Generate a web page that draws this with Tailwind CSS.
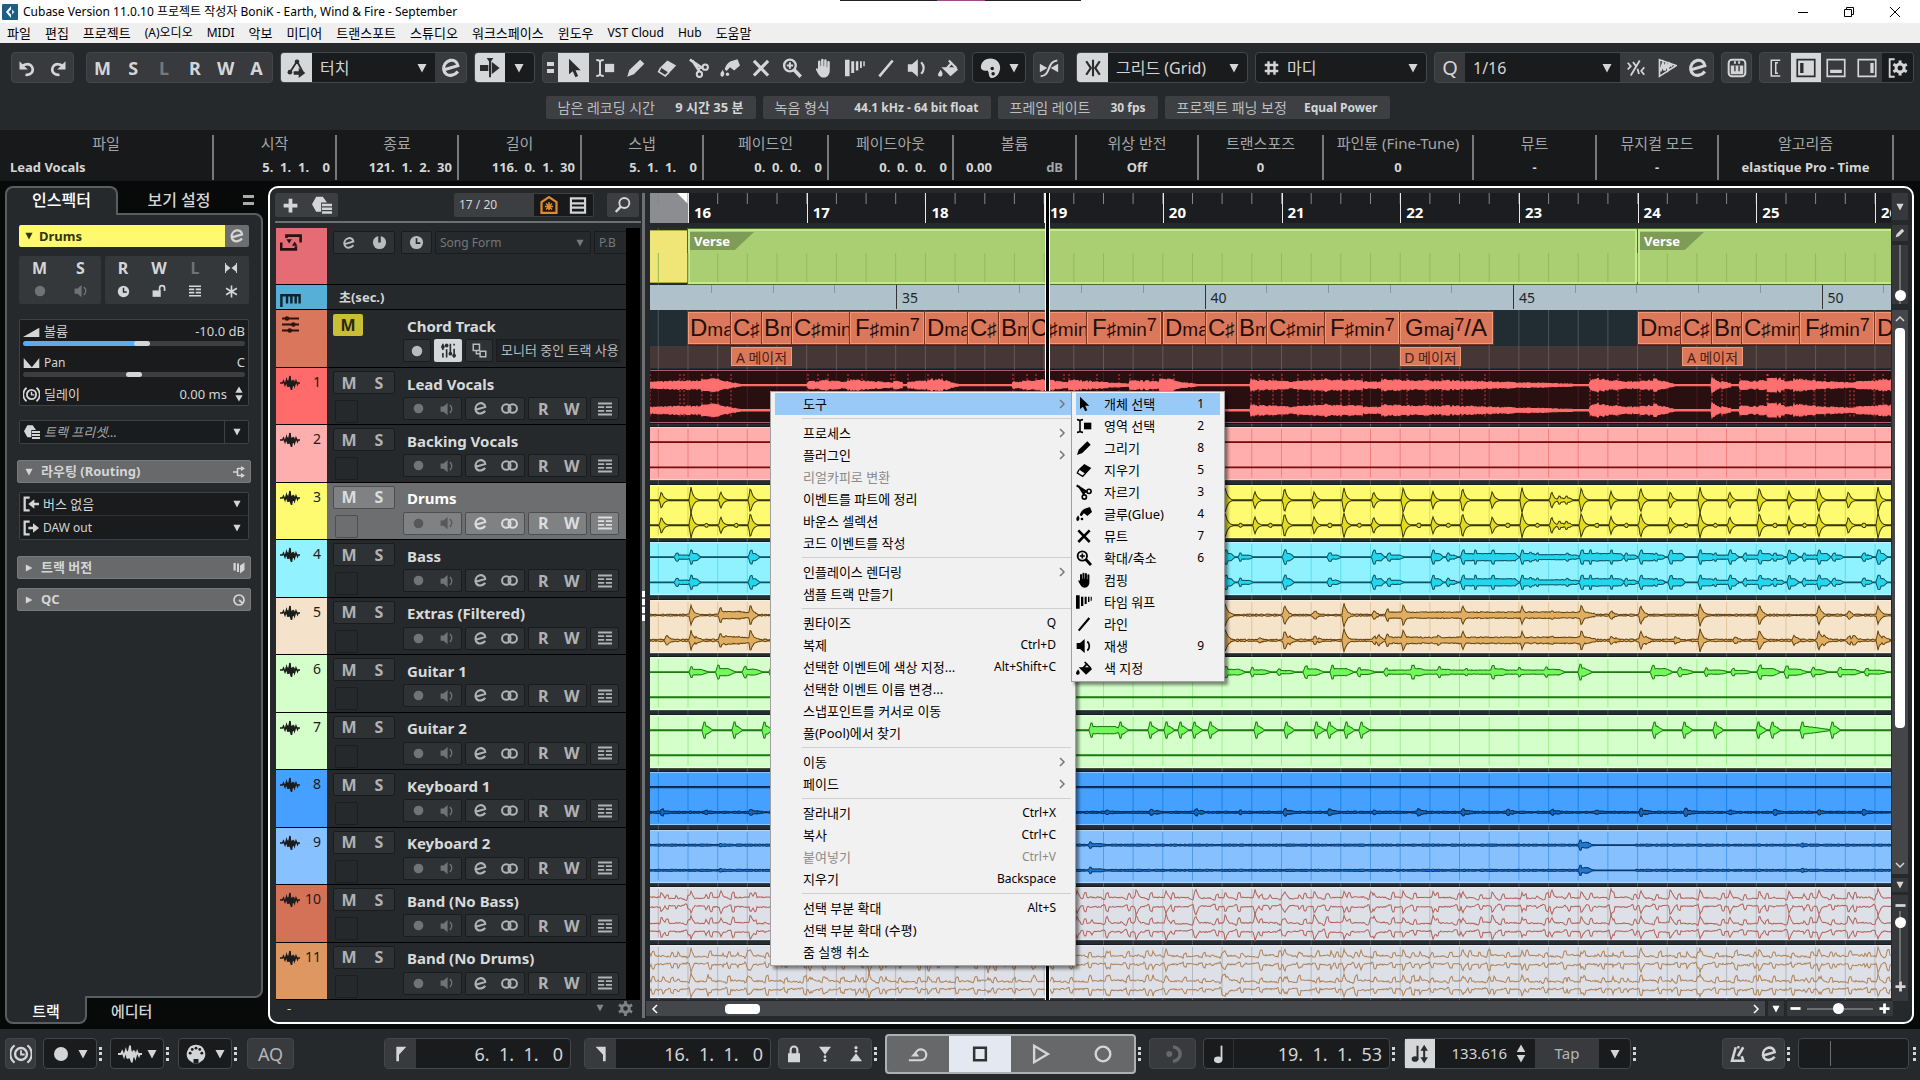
<!DOCTYPE html>
<html lang="ko">
<head>
  <meta charset="UTF-8">
  <meta name="viewport" content="width=device-width, initial-scale=1.0">
  <title>Cubase - September</title>
  <script src="https://cdn.jsdelivr.net/npm/@tailwindcss/browser@4"></script>
</head>
<body class="h-screen flex flex-col overflow-hidden bg-[#080909] text-[#d4d5d6] text-[13px] leading-none font-['Noto_Sans','Noto_Sans_CJK_KR',sans-serif]">

  <!-- icon sprite -->
  <svg class="hidden" aria-hidden="true">
    <symbol id="i-down" viewBox="0 0 10 10"><path d="M.5 1h9L5 9.500z" fill="currentColor"/></symbol>
    <symbol id="i-right" viewBox="0 0 10 10"><path d="M1 .5v9L9.500 5z" fill="currentColor"/></symbol>
    <symbol id="i-undo" viewBox="0 0 24 24"><path d="M4 11c4-5 12-6 15 0 2.500 6-2 11-9 10" fill="none" stroke="currentColor" stroke-width="3.400"/><path d="M2 3v11h11z" fill="currentColor"/></symbol>
    <symbol id="i-redo" viewBox="0 0 24 24"><path d="M20 11C16 6 8 5 5 11c-2.500 6 2 11 9 10" fill="none" stroke="currentColor" stroke-width="3.400"/><path d="M22 3v11H11z" fill="currentColor"/></symbol>
    <symbol id="i-e" viewBox="0 0 24 24"><path d="M4.500 14L19.500 9.500C19 5 15 2.800 11 3.700 6.500 4.700 3.600 9 4 13.500c.5 4.800 4.500 7.200 9 6.300 2.600-.5 5-2 6.500-4" fill="none" stroke="currentColor" stroke-width="3.400"/></symbol>
    <symbol id="i-auto" viewBox="0 0 24 24"><path d="M3 18L12 4l7 13" fill="none" stroke="currentColor" stroke-width="2.200"/><circle cx="3.500" cy="17" r="2.800" fill="currentColor"/><circle cx="12" cy="4.500" r="2.800" fill="currentColor"/><path d="M8 16h6v-4l8 6-8 6v-4H8z" fill="currentColor"/></symbol>
    <symbol id="i-scroll" viewBox="0 0 24 24"><path d="M0 8.500h10v7H0zM14 4.500l9.500 7.500-9.500 7.500z" fill="currentColor"/><path d="M12 3v20" stroke="currentColor" stroke-width="2.400"/><path d="M8 0h8l-4 6z" fill="currentColor"/></symbol>
    <symbol id="i-cursor" viewBox="0 0 24 24"><path d="M6 1v18.500l4.500-3.500 3.200 7 3.300-1.500-3.200-6.700H20z" fill="currentColor"/></symbol>
    <symbol id="i-range" viewBox="0 0 24 24"><path d="M1.500 2.500c2.500 0 4 .5 4.500 2 .5-1.500 2-2 4.500-2M6 4v16M1.500 21.500c2.500 0 4-.5 4.500-2 .5 1.500 2 2 4.500 2" fill="none" stroke="currentColor" stroke-width="2.400"/><path d="M12 7h11v10H12z" fill="currentColor"/></symbol>
    <symbol id="i-pencil" viewBox="0 0 24 24"><path d="M1.500 22.500L4 14.500 17 2l5 5L9.500 19.500z" fill="currentColor"/></symbol>
    <symbol id="i-eraser" viewBox="0 0 24 24"><path d="M12.500 3L23 9l-8.500 9L4 11z" fill="currentColor"/><path d="M4.500 11.500L2 16.500l8 5 4.500-4.500" fill="none" stroke="currentColor" stroke-width="2"/></symbol>
    <symbol id="i-scissors" viewBox="0 0 24 24"><path d="M1 2l15 10M4 3l8.500 13" stroke="currentColor" stroke-width="3.200"/><path d="M11 13l6-2" stroke="currentColor" stroke-width="2.200"/><circle cx="19.500" cy="11" r="3.200" fill="none" stroke="currentColor" stroke-width="2.400"/><circle cx="12.500" cy="19.500" r="3.200" fill="none" stroke="currentColor" stroke-width="2.400"/></symbol>
    <symbol id="i-glue" viewBox="0 0 24 24"><path d="M13 4l8-2.500L24 9l-7 6-5-4-4 4.500-2.500-2C7 9 9.500 5.800 13 4z" fill="currentColor"/><path d="M3 14c2 3 3 4.500 1.500 7S.5 22.500.5 19.500 2.500 16.500 3 14z" fill="currentColor"/><circle cx="9" cy="19.500" r="2" fill="currentColor"/></symbol>
    <symbol id="i-x" viewBox="0 0 24 24"><path d="M3.500 3.500l17 17.500M20.500 3.500L3.500 21" stroke="currentColor" stroke-width="3.800"/></symbol>
    <symbol id="i-zoom" viewBox="0 0 24 24"><circle cx="9.500" cy="9" r="7" fill="none" stroke="currentColor" stroke-width="2.800"/><path d="M9.500 5.200v7.600M5.700 9h7.600" stroke="currentColor" stroke-width="2.400"/><path d="M14.500 14l8 8.500" stroke="currentColor" stroke-width="4.400"/></symbol>
    <symbol id="i-hand" viewBox="0 0 24 24"><path d="M6 11V4.500a1.500 1.500 0 0 1 3 0V10h.7V2.500a1.500 1.500 0 0 1 3 0V10h.7V3a1.500 1.500 0 0 1 3 0v8h.7V5a1.500 1.500 0 0 1 3 0v10c0 5-3 8.500-7 8.500-4.500 0-6.500-3.500-9.500-9.500-.5-1.500 1-2.300 2-1.200L6 14.500z" fill="currentColor"/></symbol>
    <symbol id="i-warp" viewBox="0 0 24 24"><path d="M0 2h5.500v20H0zM7.500 4h3.500v14H7.500zM13 4h3v11h-3zM18 4h2.200v8H18zM22 4h1.700v6H22z" fill="currentColor"/></symbol>
    <symbol id="i-line" viewBox="0 0 24 24"><path d="M4 22L20 3" stroke="currentColor" stroke-width="3.200"/></symbol>
    <symbol id="i-speaker" viewBox="0 0 24 24"><path d="M1 7.500h5l7-6v21l-7-6H1z" fill="currentColor"/><path d="M17 5c4 4 4 10 0 14" fill="none" stroke="currentColor" stroke-width="2.600"/></symbol>
    <symbol id="i-bucket" viewBox="0 0 24 24"><path d="M4 11h18l2 3-9 8z" fill="currentColor"/><path d="M13 3l9 9M9 14l8-9" stroke="currentColor" stroke-width="2.600"/><path d="M3 14c2.500 3 3 5 2 7s-5 1.500-5-1 2-3 3-6z" fill="currentColor"/></symbol>
    <symbol id="i-palette" viewBox="0 0 24 24"><path d="M12 1C5 1 1 5.500 1 11.500c0 2.500 3 4 6.500 3.500 4-.5 1 8.500 6 8.500 5.500 0 9.500-6 9.500-12S18.500 1 12 1z" fill="currentColor"/><circle cx="14" cy="12.500" r="2" fill="#191b1d"/><circle cx="15" cy="18.500" r="2" fill="#191b1d"/></symbol>
    <symbol id="i-curve" viewBox="0 0 24 24"><path d="M2 22c13-1 7-18 20-19" fill="none" stroke="currentColor" stroke-width="2.400"/><path d="M1 7l9 5-9 5zM23 7l-9 5 9 5z" fill="currentColor"/></symbol>
    <symbol id="i-snap" viewBox="0 0 24 24"><path d="M12 1v22" stroke="currentColor" stroke-width="2.800"/><path d="M3 3l6 9-6 9M21 3l-6 9 6 9" fill="none" stroke="currentColor" stroke-width="3"/></symbol>
    <symbol id="i-hash" viewBox="0 0 24 24"><path d="M8 3v18M16 3v18M3 8h18M3 16h18" stroke="currentColor" stroke-width="3.200"/></symbol>
    <symbol id="i-iq" viewBox="0 0 24 24"><path d="M5 22L17 2M1 5l4 4.500L1 14M8 4l4 5.500M23 11l-4 5 4 5M14 13l2 7" fill="none" stroke="currentColor" stroke-width="2.400"/></symbol>
    <symbol id="i-audioq" viewBox="0 0 24 24"><path d="M3 2l20 7L3 22z" fill="none" stroke="currentColor" stroke-width="2"/><path d="M4 16l3-9 2 8 2-9 2 7 2-6 3 3" fill="none" stroke="currentColor" stroke-width="3"/></symbol>
    <symbol id="i-keys" viewBox="0 0 24 24"><rect x="2" y="2" width="20" height="20" rx="4" fill="none" stroke="currentColor" stroke-width="2.400"/><path d="M4.500 9h15v10.500h-15z" fill="currentColor"/><path d="M9.500 9v7M14.500 9v7" stroke="#333638" stroke-width="1.600"/><path d="M9.500 4v3M14.500 4v3" stroke="currentColor" stroke-width="2.400"/></symbol>
    <symbol id="i-zl" viewBox="0 0 24 24"><path d="M19 1.500H7v21h12M13 5v14M16 5h-3v14h3" fill="none" stroke="currentColor" stroke-width="2"/></symbol>
    <symbol id="i-zleft" viewBox="0 0 24 24"><path d="M1.500 2h21v20h-21z" fill="none" stroke="currentColor" stroke-width="2"/><path d="M5 6h4v12H5z" fill="currentColor"/></symbol>
    <symbol id="i-zbot" viewBox="0 0 24 24"><path d="M1.500 2h21v20h-21z" fill="none" stroke="currentColor" stroke-width="2"/><path d="M5 14h14v4H5z" fill="currentColor"/></symbol>
    <symbol id="i-zright" viewBox="0 0 24 24"><path d="M1.500 2h21v20h-21z" fill="none" stroke="currentColor" stroke-width="2"/><path d="M16 6h4v12h-4z" fill="currentColor"/></symbol>
    <symbol id="i-gear" viewBox="0 0 24 24"><circle cx="12" cy="12" r="6" fill="none" stroke="currentColor" stroke-width="4.600"/><path d="M12 0v5M12 19v5M1.500 6l5 3M17.500 15l5 3M1.500 18l5-3M17.500 9l5-3" stroke="currentColor" stroke-width="4.400"/></symbol>
    <symbol id="i-zsetup" viewBox="0 0 24 24"><path d="M8 1.500H2v21h6" fill="none" stroke="currentColor" stroke-width="2.200"/><circle cx="14.500" cy="12" r="4.800" fill="none" stroke="currentColor" stroke-width="3.600"/><path d="M14.500 3v4M14.500 17v4M6.500 7.500l3.500 2M19 14.500l3.500 2M6.500 16.500l3.500-2M19 9.500l3.500-2" stroke="currentColor" stroke-width="3.600"/></symbol>
    <symbol id="i-dot" viewBox="0 0 24 24"><circle cx="12" cy="12" r="10.500" fill="currentColor"/></symbol>
    <symbol id="i-clock" viewBox="0 0 24 24"><circle cx="12" cy="12" r="10.500" fill="currentColor"/><path d="M12 5v8h6" fill="none" stroke="#26292c" stroke-width="2.600"/></symbol>
    <symbol id="i-delay" viewBox="0 0 24 24"><circle cx="12" cy="12" r="6.500" fill="none" stroke="currentColor" stroke-width="2.600"/><path d="M12 8v4.500h4" fill="none" stroke="currentColor" stroke-width="2"/><path d="M5 2.500a12 12 0 0 0 0 19M19 2.500a12 12 0 0 1 0 19" fill="none" stroke="currentColor" stroke-width="2.400"/></symbol>
    <symbol id="i-power" viewBox="0 0 24 24"><circle cx="12" cy="12" r="10.500" fill="currentColor"/><path d="M12 0v12" stroke="#2d3033" stroke-width="4"/></symbol>
    <symbol id="i-lock" viewBox="0 0 24 24"><path d="M4 11h16v12H4z" fill="currentColor"/><path d="M7.500 12V6.500a4.500 4.500 0 0 1 9 0V12" fill="none" stroke="currentColor" stroke-width="2.800"/></symbol>
    <symbol id="i-unlock" viewBox="0 0 24 24"><path d="M1 11h14v11H1z" fill="currentColor"/><path d="M13 12V7a4.300 4.300 0 0 1 8.600 0v5" fill="none" stroke="currentColor" stroke-width="2.800"/></symbol>
    <symbol id="i-lanes" viewBox="0 0 24 24"><path d="M0 2.500h24M0 8.800h10.500M13.500 8.800H24M0 15.200h10.500M13.500 15.200H24M0 21.500h24" stroke="currentColor" stroke-width="3.200"/></symbol>
    <symbol id="i-star" viewBox="0 0 24 24"><path d="M12 1v22M2 6l20 12M22 6L2 18" stroke="currentColor" stroke-width="3"/></symbol>
    <symbol id="i-in" viewBox="0 0 24 24"><path d="M1 2v20M23 2v20" stroke="currentColor" stroke-width="2"/><path d="M1 4l10 8-10 8zM23 4l-10 8 10 8z" fill="currentColor"/></symbol>
    <symbol id="i-vol" viewBox="0 0 24 16"><path d="M0 15L23 2v13z" fill="currentColor"/></symbol>
    <symbol id="i-pan" viewBox="0 0 24 16"><path d="M1 1v14h22V1L12.500 14z" fill="currentColor"/></symbol>
    <symbol id="i-preset" viewBox="0 0 24 24"><path d="M5 2h8l5 7h-7v11H5L0 11z" fill="currentColor"/><path d="M12 12h12M12 16.500h12M12 21h12" stroke="currentColor" stroke-width="2.800"/></symbol>
    <symbol id="i-route" viewBox="0 0 24 24"><path d="M0 12h9M9 4v16M9 5h8M9 19h8" stroke="currentColor" stroke-width="3" fill="none"/><path d="M16 0l8 5-8 5zM16 14l8 5-8 5z" fill="currentColor"/></symbol>
    <symbol id="i-busin" viewBox="0 0 24 24"><path d="M10 2.500H2.500v19H10" fill="none" stroke="currentColor" stroke-width="3.400"/><path d="M24 10h-7V5l-9 7 9 7v-5h7z" fill="currentColor"/></symbol>
    <symbol id="i-busout" viewBox="0 0 24 24"><path d="M10 2.500H2.500v19H10" fill="none" stroke="currentColor" stroke-width="3.400"/><path d="M8 10h7V5l9 7-9 7v-5H8z" fill="currentColor"/></symbol>
    <symbol id="i-vers" viewBox="0 0 24 24"><path d="M1 2h4.500v15H1zM8 3h4v17H8zM14 7l9-6v15l-9 7z" fill="currentColor"/></symbol>
    <symbol id="i-knob" viewBox="0 0 24 24"><circle cx="12" cy="12" r="10" fill="none" stroke="currentColor" stroke-width="3.400"/><path d="M12 12l7 6" stroke="currentColor" stroke-width="3.400"/></symbol>
    <symbol id="i-wave" viewBox="0 0 40 30"><path d="M0 15h5l2-4 3 8 3-10 3 13 4-21 3 28 3-20 3 12 3-10 3 7 1-3h4" fill="none" stroke="currentColor" stroke-width="3"/><path d="M12 15l2-6 3 2 3-10 2 9 4 2 3-2 1 5-2 6-3 0-3 7-3-6-4 1z" fill="currentColor"/></symbol>
    <symbol id="i-stereo" viewBox="0 0 24 24"><circle cx="7.500" cy="12" r="6" fill="none" stroke="currentColor" stroke-width="2.800"/><circle cx="16.500" cy="12" r="6" fill="none" stroke="currentColor" stroke-width="2.800"/></symbol>
    <symbol id="i-arr" viewBox="0 0 24 18"><path d="M1.300 9v7.500h16V13M7 4V1.500h15.500V9" fill="none" stroke="currentColor" stroke-width="2.800"/><path d="M7 5.500h6L10 10zM13 12.500h6L16 8z" fill="currentColor"/></symbol>
    <symbol id="i-ruler" viewBox="0 0 24 15"><path d="M1.500 15V1.500h21V11M8 1v10M13 1v10M18 1v10" fill="none" stroke="currentColor" stroke-width="2.800"/></symbol>
    <symbol id="i-chord" viewBox="0 0 24 24"><path d="M0 3.500h24M0 12h24M0 20.500h24" stroke="currentColor" stroke-width="2.800"/><circle cx="7" cy="3.500" r="3.200" fill="currentColor"/><circle cx="16" cy="12" r="3.200" fill="currentColor"/><circle cx="11" cy="20.500" r="3.200" fill="currentColor"/></symbol>
    <symbol id="i-mixer" viewBox="0 0 24 24"><path d="M3 1v10M3 16v7M9 1v3M9 10v13M15 1v14M21 1v3M21 9v14" stroke="currentColor" stroke-width="2.600"/><circle cx="3" cy="6" r="3" fill="currentColor"/><circle cx="9" cy="4" r="3" fill="currentColor"/><circle cx="15" cy="17" r="3" fill="currentColor"/><circle cx="21" cy="20" r="3" fill="currentColor"/></symbol>
    <symbol id="i-map" viewBox="0 0 24 24"><path d="M2 2h10v10H2zM13 13h9v9h-9zM7 12v5h6" fill="none" stroke="currentColor" stroke-width="2.400"/></symbol>
    <symbol id="i-plus" viewBox="0 0 24 24"><path d="M12 1v22M1 12h22" stroke="currentColor" stroke-width="6"/></symbol>
    <symbol id="i-minus" viewBox="0 0 24 24"><path d="M1 12h22" stroke="currentColor" stroke-width="6"/></symbol>
    <symbol id="i-vis" viewBox="0 0 24 24"><path d="M2 22.500V8l10-6.500L22 8v14.500z" fill="none" stroke="currentColor" stroke-width="3"/><path d="M12 8v11M6.500 14h11M8 10l8 8M16 10l-8 8" stroke="currentColor" stroke-width="2"/></symbol>
    <symbol id="i-list" viewBox="0 0 24 24"><path d="M2 2h20v20H2zM2 9h20M2 15h20" fill="none" stroke="currentColor" stroke-width="3"/></symbol>
    <symbol id="i-search" viewBox="0 0 24 24"><circle cx="14" cy="9" r="7.500" fill="none" stroke="currentColor" stroke-width="2.800"/><path d="M9 14l-8 8.500" stroke="currentColor" stroke-width="3.600"/></symbol>
    <symbol id="i-midi" viewBox="0 0 24 24"><path d="M12 1a11 11 0 0 1 7 19.500l-4 2.500H9l-4-2.500A11 11 0 0 1 12 1z" fill="currentColor"/><g fill="#191b1d"><circle cx="5" cy="11" r="1.700"/><circle cx="7.500" cy="6.500" r="1.700"/><circle cx="12" cy="5" r="1.700"/><circle cx="16.500" cy="6.500" r="1.700"/><circle cx="19" cy="11" r="1.700"/><path d="M9 18h6v5H9z"/></g></symbol>
    <symbol id="i-lloc" viewBox="0 0 24 24"><path d="M5 1h15L9 13v10H5z" fill="currentColor"/></symbol>
    <symbol id="i-rloc" viewBox="0 0 24 24"><path d="M19 1H4l11 12v10h4z" fill="currentColor"/></symbol>
    <symbol id="i-pin" viewBox="0 0 24 24"><path d="M3 1h18l-9 12z" fill="currentColor"/><circle cx="12" cy="16" r="2" fill="currentColor"/><circle cx="12" cy="21.500" r="2.400" fill="currentColor"/></symbol>
    <symbol id="i-pout" viewBox="0 0 24 24"><path d="M3 23h18l-9-12z" fill="currentColor"/><circle cx="12" cy="8" r="2" fill="currentColor"/><circle cx="12" cy="2.500" r="2.400" fill="currentColor"/></symbol>
    <symbol id="i-cycle" viewBox="0 0 24 24"><path d="M1 19.500h14.500a6.500 6.500 0 1 0-6.500-7.500" fill="none" stroke="currentColor" stroke-width="2.600"/><path d="M3.500 15l5.500-6 4.500 6z" fill="currentColor"/></symbol>
    <symbol id="i-stop" viewBox="0 0 24 24"><path d="M5 4.500h14v15H5z" fill="none" stroke="currentColor" stroke-width="3"/></symbol>
    <symbol id="i-play" viewBox="0 0 24 24"><path d="M4.500 3v18L19.500 12z" fill="none" stroke="currentColor" stroke-width="2.600"/></symbol>
    <symbol id="i-rec" viewBox="0 0 24 24"><circle cx="12" cy="12" r="8" fill="none" stroke="currentColor" stroke-width="2.600"/></symbol>
    <symbol id="i-pre" viewBox="0 0 24 24"><circle cx="7" cy="12" r="4" fill="currentColor"/><path d="M12 2.500a9.500 9.500 0 0 1 0 19" fill="none" stroke="currentColor" stroke-width="4.500"/></symbol>
    <symbol id="i-note" viewBox="0 0 24 24"><path d="M15 2v17" stroke="currentColor" stroke-width="2.200"/><ellipse cx="11" cy="19" rx="5" ry="4" fill="currentColor"/></symbol>
    <symbol id="i-tempo" viewBox="0 0 24 24"><path d="M9 2v17M17 5v14" stroke="currentColor" stroke-width="2.400"/><ellipse cx="6" cy="18" rx="4" ry="3.400" fill="currentColor"/><path d="M12.500 8L17 1l4.500 7zM12.500 16l4.500 7 4.500-7z" fill="currentColor"/></symbol>
    <symbol id="i-metro" viewBox="0 0 24 24"><path d="M9 3L4 21h15l-2-6M11 3h3M12 15l7-12" fill="none" stroke="currentColor" stroke-width="3.400"/></symbol>
    <symbol id="i-spin" viewBox="0 0 10 20"><path d="M.5 8.500h9L5 .5zM.5 11.500h9l-4.500 8z" fill="currentColor"/></symbol>
    <symbol id="i-chev" viewBox="0 0 10 10"><path d="M3 1l4 4-4 4" fill="none" stroke="currentColor" stroke-width="1.500"/></symbol>
  </svg>

  <!-- top notch overlay -->
  <div class="absolute top-0 left-[840px] w-[241px] h-px bg-[#222] flex justify-center"><span class="w-12 bg-[#a04a88]"></span></div>

  <header class="h-[23px] bg-white text-black flex items-center pl-[2px] text-xs shrink-0">
    <svg class="w-4 h-4 mr-[5px]" viewBox="0 0 16 16"><rect width="16" height="16" rx="1" fill="#1b5f86"/><path d="M9 2L4 8l5 6v-3.500L6.500 8 9 5.500z" fill="#fff"/><path d="M10 5.500L12.500 8 10 10.500z" fill="#cfe6f2"/></svg>
    <h1>Cubase Version 11.0.10 프로젝트 작성자 BoniK - Earth, Wind &amp; Fire - September</h1>
    <div class="ml-auto mr-[2px] flex">
      <button aria-label="최소화" class="w-[46px] grid place-items-center"><svg width="10" height="10"><path d="M0 5.500h10" stroke="#000"/></svg></button>
      <button aria-label="이전 크기로" class="w-[46px] grid place-items-center"><svg width="10" height="10" fill="none" stroke="#000"><path d="M.5 2.500h7v7h-7zM2.500 2.500v-2h7v7h-2"/></svg></button>
      <button aria-label="닫기" class="w-[46px] grid place-items-center"><svg width="10" height="10"><path d="M0 0l10 10M10 0L0 10" stroke="#000"/></svg></button>
    </div>
  </header>

  <nav class="h-5 bg-[#efefef] text-black flex items-center gap-[14px] pl-[7px] text-[13px] shrink-0">
    <a href="#">파일</a><a href="#">편집</a><a href="#">프로젝트</a><a href="#" class="text-xs">(A)오디오</a><a href="#" class="text-xs">MIDI</a><a href="#">악보</a><a href="#">미디어</a><a href="#">트랜스포트</a><a href="#">스튜디오</a><a href="#">워크스페이스</a><a href="#">윈도우</a><a href="#" class="text-xs">VST Cloud</a><a href="#" class="text-xs">Hub</a><a href="#">도움말</a>
  </nav>

  <section class="h-[87px] bg-[#26292c] pt-[9px] pl-[11px] pr-[6px] shrink-0">
    <div class="flex gap-[7px] h-[31px]" id="toolbar">
      <div class="w-[63px] mr-[5px] flex rounded-sm bg-[#383a3d] border border-[#44464a]">
        <button aria-label="실행 취소" class="flex-1 grid place-items-center"><svg class="w-[18px] h-[18px]"><use href="#i-undo"/></svg></button>
        <button aria-label="다시 실행" class="flex-1 grid place-items-center"><svg class="w-[18px] h-[18px]"><use href="#i-redo"/></svg></button>
      </div>
      <div class="w-[187px] flex rounded-sm bg-[#383a3d] border border-[#44464a] font-bold text-lg">
        <button class="flex-1">M</button><button class="flex-1">S</button><button class="flex-1 text-[#75777a]">L</button><button class="flex-1">R</button><button class="flex-1">W</button><button class="flex-1">A</button>
      </div>
      <div class="w-[187px] flex rounded-sm bg-[#383a3d] border border-[#44464a] overflow-hidden">
        <button aria-label="오토메이션 모드" class="w-[31px] bg-[#d5d7d9] text-[#2a2c2e] grid place-items-center"><svg class="w-5 h-6"><use href="#i-auto"/></svg></button>
        <div class="relative flex-1 bg-[#191b1d] flex items-center">
          <select aria-label="오토메이션 모드 선택" class="appearance-none w-full h-full pl-2 text-base outline-none"><option>터치</option></select>
          <svg class="absolute right-2 w-[10px] h-[10px] pointer-events-none"><use href="#i-down"/></svg>
        </div>
        <button aria-label="오토메이션 패널" class="w-[31px] grid place-items-center"><svg class="w-[22px] h-[22px]"><use href="#i-e"/></svg></button>
      </div>
      <div class="w-[61px] flex rounded-sm bg-[#191b1d] border border-[#44464a] overflow-hidden">
        <button aria-label="오토스크롤" class="flex-1 bg-[#d5d7d9] text-[#2a2c2e] grid place-items-center"><svg class="w-5 h-5"><use href="#i-scroll"/></svg></button>
        <button aria-label="오토스크롤 설정" class="flex-1 grid place-items-center"><svg class="w-[10px] h-[10px]"><use href="#i-down"/></svg></button>
      </div>
      <div class="w-[423px] flex rounded-sm bg-[#383a3d] border border-[#44464a]" id="tools">
        <span class="w-[15px] shrink-0 flex flex-col gap-[3px] items-center justify-center"><i class="w-[7px] h-1 bg-[#d4d5d6]"></i><i class="w-[7px] h-1 bg-[#d4d5d6]"></i></span>
      </div>
      <button aria-label="색상" class="w-[54px] flex items-center justify-center gap-2 rounded-sm bg-[#191b1d] border border-[#44464a]"><svg class="w-[21px] h-[22px]"><use href="#i-palette"/></svg><svg class="w-[10px] h-[10px]"><use href="#i-down"/></svg></button>
      <button aria-label="제로 크로싱" class="w-[31px] mr-[5px] grid place-items-center rounded-sm bg-[#383a3d] border border-[#44464a]"><svg class="w-5 h-5"><use href="#i-curve"/></svg></button>
      <div class="w-[172px] flex rounded-sm bg-[#191b1d] border border-[#44464a] overflow-hidden">
        <button aria-label="스냅" class="w-[31px] bg-[#d5d7d9] text-[#2a2c2e] grid place-items-center"><svg class="w-[18px] h-5"><use href="#i-snap"/></svg></button>
        <div class="relative flex-1 flex items-center">
          <select aria-label="스냅 유형" class="appearance-none w-full h-full pl-2 text-base outline-none"><option>그리드 (Grid)</option></select>
          <svg class="absolute right-2 w-[10px] h-[10px] pointer-events-none"><use href="#i-down"/></svg>
        </div>
      </div>
      <div class="relative w-[172px] flex items-center rounded-sm bg-[#191b1d] border border-[#44464a]">
        <svg class="w-[19px] h-[18px] ml-[6px] shrink-0"><use href="#i-hash"/></svg>
        <select aria-label="그리드 유형" class="appearance-none w-full h-full pl-[6px] text-base outline-none"><option>마디</option></select>
        <svg class="absolute right-2 w-[10px] h-[10px] pointer-events-none"><use href="#i-down"/></svg>
      </div>
      <div class="flex-1 flex rounded-sm bg-[#383a3d] border border-[#44464a]">
        <button class="w-[30px] text-xl">Q</button>
        <div class="relative flex-1 bg-[#191b1d] flex items-center">
          <select aria-label="퀀타이즈 프리셋" class="appearance-none w-full h-full pl-2 text-base outline-none"><option>1/16</option></select>
          <svg class="absolute right-2 w-[10px] h-[10px] pointer-events-none"><use href="#i-down"/></svg>
        </div>
        <button aria-label="소프트 퀀타이즈" class="w-[31px] grid place-items-center"><svg class="w-[18px] h-5"><use href="#i-iq"/></svg></button>
        <button aria-label="오디오 퀀타이즈" class="w-[31px] grid place-items-center"><svg class="w-5 h-5"><use href="#i-audioq"/></svg></button>
        <button aria-label="퀀타이즈 패널" class="w-[31px] grid place-items-center"><svg class="w-[22px] h-[22px]"><use href="#i-e"/></svg></button>
      </div>
      <button aria-label="입력" class="w-[31px] grid place-items-center rounded-sm bg-[#383a3d] border border-[#44464a]"><svg class="w-5 h-5"><use href="#i-keys"/></svg></button>
      <div class="w-[155px] flex rounded-sm bg-[#383a3d] border border-[#44464a] overflow-hidden">
        <button aria-label="왼쪽 구역 열기" class="flex-1 grid place-items-center"><svg class="w-[22px] h-[18px]"><use href="#i-zl"/></svg></button>
        <button aria-label="왼쪽 구역" class="flex-1 bg-[#d5d7d9] text-[#2a2c2e] grid place-items-center"><svg class="w-[22px] h-5"><use href="#i-zleft"/></svg></button>
        <button aria-label="아래쪽 구역" class="flex-1 grid place-items-center"><svg class="w-[22px] h-5"><use href="#i-zbot"/></svg></button>
        <button aria-label="오른쪽 구역" class="flex-1 grid place-items-center"><svg class="w-[22px] h-5"><use href="#i-zright"/></svg></button>
        <button aria-label="창 레이아웃 설정" class="flex-1 bg-[#191b1d] grid place-items-center"><svg class="w-5 h-5"><use href="#i-zsetup"/></svg></button>
      </div>
    </div>
    <div class="flex justify-center gap-[7px] mt-[13px] h-[23px] pl-[10px] text-sm text-[#bcbec0]">
      <div class="w-[210px] px-3 bg-[#3d3f42] rounded-xs flex items-center justify-between"><span>남은 레코딩 시간</span><b class="text-[13px] text-[#d4d5d6]">9 시간 35 분</b></div>
      <div class="w-[228px] px-3 bg-[#3d3f42] rounded-xs flex items-center justify-between"><span>녹음 형식</span><b class="text-[12px] text-[#d4d5d6]">44.1 kHz - 64 bit float</b></div>
      <div class="w-[160px] px-3 bg-[#3d3f42] rounded-xs flex items-center justify-between"><span>프레임 레이트</span><b class="text-[12px] text-[#d4d5d6]">30 fps</b></div>
      <div class="w-[225px] px-3 bg-[#3d3f42] rounded-xs flex items-center justify-between"><span>프로젝트 패닝 보정</span><b class="text-[12px] text-[#d4d5d6]">Equal Power</b></div>
    </div>
  </section>

  <section id="infoline" class="h-[51px] shrink-0 bg-[#17191a] grid grid-cols-[214fr_123fr_122fr_123fr_122fr_125fr_125fr_123fr_122fr_125fr_150fr_123fr_122fr_175fr_26fr] pt-[5px] pb-px"></section>

  <main class="flex-1 min-h-0 flex pt-[5px] pr-[6px] pb-[5px]">
    <!-- inspector -->
    <aside class="w-[263px] pl-[5px] flex flex-col shrink-0">
      <div class="flex h-[27px] shrink-0 text-base font-medium">
        <button class="relative z-10 w-[113px] -mb-[2px] pb-1 rounded-t-lg border-2 border-b-0 border-[#5b5e61] bg-[#26292c] text-white">인스펙터</button>
        <button class="w-[122px]">보기 설정</button>
        <button aria-label="인스펙터 설정" class="ml-[3px] flex flex-col gap-1 justify-center"><i class="w-[11px] h-[3px] bg-[#a9abad]"></i><i class="w-[11px] h-[3px] bg-[#a9abad]"></i></button>
      </div>
      <div class="flex-1 rounded-tr-lg rounded-br-lg border-2 border-[#5b5e61] bg-[#26292c] px-[10px] pt-[10px]">
        <div class="flex h-[22px] mx-[2px]">
          <button class="flex-1 bg-[#fff96e] text-[#35340e] font-bold text-[13px] flex items-center rounded-l-xs"><svg class="w-2 h-2 mx-[6px]"><use href="#i-down"/></svg>Drums</button>
          <button aria-label="채널 편집" class="w-6 bg-[#6c6e70] grid place-items-center rounded-r-xs"><svg class="w-4 h-4"><use href="#i-e"/></svg></button>
        </div>
        <div class="flex gap-1 mx-[2px] mt-[9px] h-12">
          <div class="w-[82px] grid grid-cols-2 grid-rows-2 bg-[#35383a] rounded-xs font-bold text-base leading-none place-items-center pb-px">
            <button>M</button><button>S</button>
            <button aria-label="녹음 준비" class="text-[#707274]"><svg class="w-3 h-3"><use href="#i-dot"/></svg></button>
            <button aria-label="모니터" class="text-[#707274]"><svg class="w-[14px] h-[14px]"><use href="#i-speaker"/></svg></button>
          </div>
          <div class="flex-1 grid grid-cols-4 grid-rows-2 bg-[#35383a] rounded-xs font-bold text-base leading-none place-items-center pb-px">
            <button>R</button><button>W</button><button class="text-[#707274]">L</button>
            <button aria-label="입력 전환"><svg class="w-3 h-3"><use href="#i-in"/></svg></button>
            <button aria-label="타임베이스"><svg class="w-[13px] h-[13px]"><use href="#i-clock"/></svg></button>
            <button aria-label="잠금"><svg class="w-[14px] h-[14px]"><use href="#i-unlock"/></svg></button>
            <button aria-label="레인"><svg class="w-3 h-3"><use href="#i-lanes"/></svg></button>
            <button aria-label="동결"><svg class="w-[13px] h-[13px]"><use href="#i-star"/></svg></button>
          </div>
        </div>
        <div class="mx-[2px] mt-[15px] h-[87px] border border-[#3f4244] rounded-xs bg-[#191b1d] px-[3px] pt-1">
          <div class="flex items-center h-[15px] gap-1"><svg class="w-[17px] h-3"><use href="#i-vol"/></svg><label for="vol">볼륨</label><output class="ml-auto">-10.0 dB</output></div>
          <input id="vol" type="range" value="54" class="block mt-[2px] w-full h-[5px] appearance-none rounded-full bg-[linear-gradient(90deg,#5aabf2_52%,#3c3e40_52%)] [&::-webkit-slider-thumb]:appearance-none [&::-webkit-slider-thumb]:w-4 [&::-webkit-slider-thumb]:h-[5px] [&::-webkit-slider-thumb]:rounded-full [&::-webkit-slider-thumb]:bg-[#d4d5d6]">
          <div class="flex items-center h-[15px] mt-[9px] gap-1"><svg class="w-[17px] h-3"><use href="#i-pan"/></svg><label for="pan" class="text-xs">Pan</label><output class="ml-auto">C</output></div>
          <input id="pan" type="range" value="50" class="block mt-[2px] w-full h-[5px] appearance-none rounded-full bg-[#3c3e40] [&::-webkit-slider-thumb]:appearance-none [&::-webkit-slider-thumb]:w-4 [&::-webkit-slider-thumb]:h-[5px] [&::-webkit-slider-thumb]:rounded-full [&::-webkit-slider-thumb]:bg-[#d4d5d6]">
          <div class="flex items-center h-4 mt-[9px] gap-1"><svg class="w-[17px] h-[17px]"><use href="#i-delay"/></svg><label for="delay">딜레이</label><input id="delay" value="0.00 ms" class="ml-auto w-20 text-right outline-none"><svg class="w-2 h-4 ml-1 mr-[2px]"><use href="#i-spin"/></svg></div>
        </div>
        <button class="mx-[2px] mt-[14px] w-[230px] h-6 border border-[#3f4244] rounded-xs bg-[#191b1d] flex items-center text-[13px] italic text-[#a4a6a8]"><svg class="w-4 h-4 mx-1 text-[#d4d5d6]"><use href="#i-preset"/></svg>트랙 프리셋...<span class="ml-auto h-full w-6 border-l border-[#3f4244] grid place-items-center text-[#d4d5d6]"><svg class="w-2 h-2"><use href="#i-down"/></svg></span></button>
        <button class="mt-4 w-full h-[23px] rounded-xs bg-[#67696b] border border-[#77797b] flex items-center font-bold px-[5px]"><svg class="w-2 h-2 ml-[2px] mr-2"><use href="#i-down"/></svg>라우팅 (Routing)<svg class="w-3 h-3 ml-auto"><use href="#i-route"/></svg></button>
        <div class="mx-[2px] mt-[9px] border border-[#3f4244] rounded-xs bg-[#191b1d]">
          <div class="relative h-[23px] flex items-center border-b border-[#303234]"><svg class="w-4 h-4 ml-[3px] shrink-0"><use href="#i-busin"/></svg><select aria-label="입력 버스" class="appearance-none w-full pl-1 outline-none"><option>버스 없음</option></select><svg class="absolute right-[7px] w-2 h-2 pointer-events-none"><use href="#i-down"/></svg></div>
          <div class="relative h-[23px] flex items-center"><svg class="w-4 h-4 ml-[3px] shrink-0"><use href="#i-busout"/></svg><select aria-label="출력 버스" class="appearance-none w-full pl-1 text-xs outline-none"><option>DAW out</option></select><svg class="absolute right-[7px] w-2 h-2 pointer-events-none"><use href="#i-down"/></svg></div>
        </div>
        <button class="mt-4 w-full h-[23px] rounded-xs bg-[#67696b] border border-[#77797b] flex items-center font-bold px-[5px]"><svg class="w-2 h-2 ml-[2px] mr-2"><use href="#i-right"/></svg>트랙 버전<svg class="w-3 h-3 ml-auto"><use href="#i-vers"/></svg></button>
        <button class="mt-[9px] w-full h-[23px] rounded-xs bg-[#67696b] border border-[#77797b] flex items-center font-bold px-[5px]"><svg class="w-2 h-2 ml-[2px] mr-2"><use href="#i-right"/></svg>QC<svg class="w-3 h-3 ml-auto"><use href="#i-knob"/></svg></button>
      </div>
      <div class="flex h-[26px] shrink-0 text-[15px] font-medium">
        <button class="relative z-10 w-[82px] -mt-[2px] rounded-b-lg border-2 border-t-0 border-[#5b5e61] bg-[#26292c] pt-1 text-white">트랙</button>
        <button class="ml-[24px]">에디터</button>
      </div>
    </aside>

    <!-- project window -->
    <section class="ml-[5px] flex-1 min-w-0 flex rounded-[10px] border-2 border-white bg-[#26292c] pt-[5px]">
      <div class="w-[371px] pl-[5px] flex flex-col shrink-0">
        <div class="h-[30px] shrink-0 flex border-b-2 border-[#6d6f71] mb-[5px] pb-1">
          <div class="flex w-[63px] bg-[#3c3e41] rounded-xs h-6">
            <button aria-label="트랙 추가" class="flex-1 grid place-items-center"><svg class="w-[15px] h-[15px]"><use href="#i-plus"/></svg></button>
            <button aria-label="프리셋으로 트랙 추가" class="flex-1 grid place-items-center"><svg class="w-5 h-5"><use href="#i-preset"/></svg></button>
          </div>
          <div class="ml-[116px] flex w-[140px] h-6 border border-[#3c3e41] rounded-xs bg-[#17191a]">
            <span class="w-[79px] bg-[#3c3e41] pl-1 flex items-center text-xs">17 / 20</span>
            <button aria-label="가시성" class="flex-1 grid place-items-center text-[#e08a2c]"><svg class="w-[18px] h-[18px]"><use href="#i-vis"/></svg></button>
            <button aria-label="트랙 목록" class="flex-1 grid place-items-center"><svg class="w-[18px] h-[17px]"><use href="#i-list"/></svg></button>
          </div>
          <button aria-label="검색" class="ml-auto w-8 h-6 bg-[#3c3e41] rounded-xs grid place-items-center mr-[2px]"><svg class="w-4 h-4"><use href="#i-search"/></svg></button>
        </div>
        <div class="flex-1 min-h-0 flex flex-col bg-black ml-px mr-px pr-[14px]">
          <div class="h-[57px] shrink-0 flex bg-[#26292c] border-b border-black overflow-hidden">
            <div class="w-[51px] bg-[#e56b74] p-1 shrink-0 text-[#2a1214]"><svg class="w-[22px] h-[17px] mt-[2px]"><use href="#i-arr"/></svg></div>
            <div class="flex pl-[6px] pt-[3px] text-[#b9bbbd] w-[299px]">
              <div class="w-[62px] h-[23px] flex bg-[#2f3235] border border-[#191b1c] rounded-xs"><button aria-label="편집" class="flex-1 grid place-items-center"><svg class="w-[14px] h-[14px]"><use href="#i-e"/></svg></button><button aria-label="활성화" class="flex-1 grid place-items-center"><svg class="w-[15px] h-[15px]"><use href="#i-power"/></svg></button></div>
              <button aria-label="타임베이스" class="ml-[6px] w-[31px] h-[23px] grid place-items-center bg-[#2f3235] border border-[#191b1c] rounded-xs"><svg class="w-[15px] h-[15px]"><use href="#i-clock"/></svg></button>
              <div class="relative ml-[3px] w-[156px] h-[23px] flex items-center border border-[#191b1c] text-[#75777a] rounded-xs"><select aria-label="어레인저 체인" class="appearance-none w-full pl-1 text-xs outline-none"><option>Song Form</option></select><svg class="absolute right-[6px] w-2 h-2 pointer-events-none"><use href="#i-down"/></svg></div>
              <span class="ml-[3px] w-8 h-[23px] flex items-center pl-1 border border-r-0 border-[#191b1c] text-[#75777a] text-xs">P.B</span>
            </div>
          </div>
          <div class="h-[25px] shrink-0 flex bg-[#26292c] border-b border-black">
            <div class="w-[51px] bg-[#55afd6] pl-1 pt-[9px] text-[#10242e]"><svg class="w-[21px] h-[13px]"><use href="#i-ruler"/></svg></div>
            <span class="pl-3 flex items-center font-bold text-[13px]">초(sec.)</span>
          </div>
          <div class="h-[58px] shrink-0 flex bg-[#26292c] border-b border-black overflow-hidden">
            <div class="w-[51px] shrink-0 bg-[#d9765c] pl-[6px] pt-[6px] text-[#2c130c]"><svg class="w-[17px] h-[17px]"><use href="#i-chord"/></svg></div>
            <div class="w-[73px] pl-[6px] pt-1 shrink-0"><button class="w-[30px] h-[22px] rounded-xs bg-[#c9be35] text-[#2a280a] font-bold text-base leading-none">M</button></div>
            <div class="pl-[3px] pt-[3px] text-[#b9bbbd] w-[220px]">
              <div class="h-[26px] pl-1 flex items-center font-bold text-[15px] text-[#d8d9da]">Chord Track</div>
              <div class="flex gap-[3px] h-[23px]">
                <button aria-label="녹음 준비" class="w-7 grid place-items-center bg-[#2f3235] border border-[#191b1c] rounded-xs"><svg class="w-3 h-3"><use href="#i-dot"/></svg></button>
                <button aria-label="라이브 입력" class="w-7 grid place-items-center bg-[#d5d7d9] text-[#2a2c2e] rounded-xs"><svg class="w-[15px] h-[15px]"><use href="#i-mixer"/></svg></button>
                <button aria-label="보이싱 매핑" class="w-7 grid place-items-center bg-[#2f3235] border border-[#191b1c] rounded-xs"><svg class="w-[15px] h-[15px]"><use href="#i-map"/></svg></button>
                <button class="w-[124px] h-[23px] pl-1 text-left overflow-hidden whitespace-nowrap border border-r-0 border-[#191b1c] bg-[#202325]">모니터 중인 트랙 사용</button>
              </div>
            </div>
          </div>
          <div id="tracks" class="flex-1 min-h-0 flex flex-col"></div>
        </div>
        <div class="h-[22px] shrink-0 flex items-center pl-3 pr-2 text-[#808284] pb-[6px]"><span class="text-[#d4d5d6]">-</span><svg class="ml-auto w-3 h-2"><use href="#i-down"/></svg><svg class="w-[15px] h-[15px] ml-3"><use href="#i-gear"/></svg></div>
      </div>
      <div class="w-[5px] shrink-0 flex justify-center mb-1"><span class="w-[3px] bg-[#6d6f71] flex flex-col justify-center"><i class="h-[30px] border-l-[3px] border-dashed border-white"></i></span></div>

      <div class="flex-1 min-w-0 flex flex-col">
        <div class="flex-1 min-h-0 flex">
          <div class="ml-1 relative flex-1 min-w-0 flex flex-col mb-px overflow-hidden" id="timeline">
            <div id="ruler" class="relative h-[30px] shrink-0 bg-[#1b1d20] overflow-hidden"></div>
            <div id="arranger" class="relative h-[57px] mt-[5px] shrink-0 bg-[#222c33] overflow-hidden"></div>
            <div id="seconds" class="relative h-[25px] shrink-0 bg-[#afc1ca] overflow-hidden"></div>
            <div id="chords" class="relative h-9 shrink-0 bg-[#222c33] overflow-hidden"></div>
            <div id="scales" class="relative h-[22px] shrink-0 bg-[#463635] overflow-hidden"></div>
            <div id="lanes" class="flex-1 min-h-0 flex flex-col"></div>
            <div class="absolute top-0 bottom-0 left-[31.8%] w-[5px] bg-black border-x border-white"></div>
          </div>
          <div class="w-4 ml-px mr-1 shrink-0 flex flex-col items-center text-[#d4d5d6]">
            <button aria-label="눈금자 형식" class="w-4 h-[27px] bg-[#36383b] grid place-items-center"><svg class="w-2 h-[10px]"><use href="#i-down"/></svg></button>
            <button aria-label="그리기" class="w-4 h-4 mt-[5px] bg-[#36383b] grid place-items-center"><svg class="w-[10px] h-[10px]"><use href="#i-pencil"/></svg></button>
            <input aria-label="파형 확대" type="range" value="94" class="mt-1 w-4 h-[59px] shrink-0 appearance-none [writing-mode:vertical-lr] bg-[linear-gradient(90deg,#36383b_7px,#6d6f71_7px,#6d6f71_9px,#36383b_9px)] [&::-webkit-slider-thumb]:appearance-none [&::-webkit-slider-thumb]:w-[11px] [&::-webkit-slider-thumb]:h-[11px] [&::-webkit-slider-thumb]:rounded-full [&::-webkit-slider-thumb]:bg-white">
            <div class="mt-[6px] flex-1 w-4 bg-[#444649] flex flex-col items-center">
              <svg class="w-[10px] h-[10px] my-[4px] -rotate-90"><use href="#i-chev"/></svg>
              <div class="w-[10px] h-[400px] bg-white rounded-sm"></div>
              <svg class="w-[10px] h-[10px] mt-auto mb-1 rotate-90"><use href="#i-chev"/></svg>
            </div>
            <button aria-label="트랙 높이" class="w-4 h-[14px] mt-1 bg-[#36383b] grid place-items-center"><svg class="w-2 h-2"><use href="#i-down"/></svg></button>
            <div class="w-4 h-[106px] mt-[3px] bg-[#36383b] flex flex-col items-center">
              <svg class="w-[11px] h-[11px] mt-[5px]"><use href="#i-minus"/></svg>
              <input aria-label="세로 확대" type="range" value="10" class="w-4 h-[70px] my-1 appearance-none [writing-mode:vertical-lr] bg-[linear-gradient(90deg,transparent_7px,#6d6f71_7px,#6d6f71_9px,transparent_9px)] [&::-webkit-slider-thumb]:appearance-none [&::-webkit-slider-thumb]:w-[11px] [&::-webkit-slider-thumb]:h-[11px] [&::-webkit-slider-thumb]:rounded-full [&::-webkit-slider-thumb]:bg-white">
              <svg class="w-[11px] h-[11px]"><use href="#i-plus"/></svg>
            </div>
          </div>
        </div>
        <div class="h-[15px] mb-[6px] mr-[19px] shrink-0 flex items-stretch text-white">
          <div class="flex-1 bg-[#444649] flex items-center">
            <svg class="w-[10px] h-[10px] ml-1 rotate-180"><use href="#i-chev"/></svg>
            <div class="ml-[65px] w-[35px] h-[10px] bg-white rounded-sm"></div>
            <svg class="w-[10px] h-[10px] ml-auto mr-1"><use href="#i-chev"/></svg>
          </div>
          <button aria-label="확대 프리셋" class="w-4 mx-[3px] bg-[#36383b] grid place-items-center"><svg class="w-2 h-2"><use href="#i-down"/></svg></button>
          <div class="w-[106px] bg-[#36383b] flex items-center justify-between px-[3px]">
            <svg class="w-[11px] h-[11px]"><use href="#i-minus"/></svg>
            <input aria-label="가로 확대" type="range" value="48" class="w-[66px] h-3 appearance-none bg-[linear-gradient(transparent_5px,#6d6f71_5px,#6d6f71_7px,transparent_7px)] [&::-webkit-slider-thumb]:appearance-none [&::-webkit-slider-thumb]:w-[11px] [&::-webkit-slider-thumb]:h-[11px] [&::-webkit-slider-thumb]:rounded-full [&::-webkit-slider-thumb]:bg-white">
            <svg class="w-[11px] h-[11px]"><use href="#i-plus"/></svg>
          </div>
        </div>
      </div>
    </section>
  </main>

  <footer class="h-[51px] shrink-0 bg-[#26292c] flex items-center pl-[5px] pr-1 pb-[2px] text-lg">
    <button aria-label="지연 보정" class="w-[31px] h-[31px] grid place-items-center rounded-sm bg-[#383a3d] border border-[#44464a]"><svg class="w-[22px] h-[22px]"><use href="#i-delay"/></svg></button>
    <button aria-label="오디오 녹음 모드" class="ml-[7px] w-[54px] h-[31px] flex items-center justify-center gap-[9px] rounded-sm bg-[#191b1d] border border-[#44464a]"><svg class="w-4 h-4"><use href="#i-dot"/></svg><svg class="w-[10px] h-[10px]"><use href="#i-down"/></svg></button>
    <i class="ml-[2px] h-[14px] border-l-[3px] border-dotted border-[#d4d5d6]"></i>
    <button aria-label="오디오 모드" class="ml-[8px] w-[54px] h-[31px] flex items-center justify-center gap-[5px] rounded-sm bg-[#191b1d] border border-[#44464a]"><svg class="w-6 h-5"><use href="#i-wave"/></svg><svg class="w-[10px] h-[10px]"><use href="#i-down"/></svg></button>
    <i class="ml-[2px] h-[14px] border-l-[3px] border-dotted border-[#d4d5d6]"></i>
    <button aria-label="미디 모드" class="ml-[9px] w-[54px] h-[31px] flex items-center justify-center gap-[9px] rounded-sm bg-[#191b1d] border border-[#44464a]"><svg class="w-5 h-5"><use href="#i-midi"/></svg><svg class="w-[10px] h-[10px]"><use href="#i-down"/></svg></button>
    <i class="ml-[2px] h-[14px] border-l-[3px] border-dotted border-[#d4d5d6]"></i>
    <button class="ml-[10px] w-[47px] h-[31px] rounded-sm bg-[#383a3d] border border-[#44464a] text-[#b4b6b8]">AQ</button>

    <div class="ml-[90px] w-[187px] h-[31px] flex rounded-sm bg-[#191b1d] border border-[#44464a]"><button aria-label="왼쪽 로케이터로" class="w-[31px] bg-[#383a3d] grid place-items-center"><svg class="w-4 h-4"><use href="#i-lloc"/></svg></button><input aria-label="왼쪽 로케이터" value="6.  1.  1.   0" class="flex-1 min-w-0 whitespace-pre text-right pr-[7px] outline-none"></div>
    <div class="ml-[13px] w-[187px] h-[31px] flex rounded-sm bg-[#191b1d] border border-[#44464a]"><button aria-label="오른쪽 로케이터로" class="w-[31px] bg-[#383a3d] grid place-items-center"><svg class="w-4 h-4"><use href="#i-rloc"/></svg></button><input aria-label="오른쪽 로케이터" value="16.  1.  1.   0" class="flex-1 min-w-0 whitespace-pre text-right pr-[7px] outline-none"></div>
    <div class="ml-[7px] w-[94px] h-[31px] flex rounded-sm bg-[#383a3d] border border-[#44464a]">
      <button aria-label="로케이터 잠금" class="flex-1 grid place-items-center"><svg class="w-[18px] h-[18px]"><use href="#i-lock"/></svg></button>
      <button aria-label="펀치 인" class="flex-1 grid place-items-center"><svg class="w-4 h-4"><use href="#i-pin"/></svg></button>
      <button aria-label="펀치 아웃" class="flex-1 grid place-items-center"><svg class="w-4 h-4"><use href="#i-pout"/></svg></button>
    </div>
    <i class="ml-[2px] h-[14px] border-l-[3px] border-dotted border-[#d4d5d6]"></i>
    <div class="ml-[8px] w-[251px] h-[40px] flex rounded-sm bg-[#66686a] border-2 border-[#aeb0b2]">
      <button aria-label="사이클" class="flex-1 grid place-items-center"><svg class="w-5 h-5"><use href="#i-cycle"/></svg></button>
      <button aria-label="정지" class="flex-1 grid place-items-center bg-[#e4e8f0] text-[#303234]"><svg class="w-5 h-5"><use href="#i-stop"/></svg></button>
      <button aria-label="재생" class="flex-1 grid place-items-center"><svg class="w-[22px] h-[22px]"><use href="#i-play"/></svg></button>
      <button aria-label="녹음" class="flex-1 grid place-items-center"><svg class="w-[22px] h-[22px]"><use href="#i-rec"/></svg></button>
    </div>
    <i class="ml-[2px] h-[14px] border-l-[3px] border-dotted border-[#d4d5d6]"></i>
    <button aria-label="프리롤" class="ml-[8px] w-[47px] h-[31px] grid place-items-center rounded-sm bg-[#383a3d] border border-[#44464a] text-[#66686a]"><svg class="w-[18px] h-[18px]"><use href="#i-pre"/></svg></button>
    <div class="ml-[7px] w-[187px] h-[31px] flex rounded-sm bg-[#191b1d] border border-[#44464a]"><button aria-label="시간 형식" class="w-[30px] border-r border-[#303234] grid place-items-center"><svg class="w-5 h-5"><use href="#i-note"/></svg></button><input aria-label="현재 위치" value="19.  1.  1.  53" class="flex-1 min-w-0 whitespace-pre text-right pr-[7px] outline-none"></div>
    <i class="ml-[2px] h-[14px] border-l-[3px] border-dotted border-[#d4d5d6]"></i>
    <div class="ml-[9px] w-[227px] h-[31px] flex items-stretch rounded-sm bg-[#191b1d] border border-[#44464a] text-[15px]">
      <button aria-label="템포 트랙" class="w-[30px] bg-[#d5d7d9] text-[#2a2c2e] grid place-items-center"><svg class="w-5 h-5"><use href="#i-tempo"/></svg></button>
      <input aria-label="템포" value="133.616" class="w-[72px] min-w-0 text-right outline-none"><svg class="w-[10px] h-[19px] m-auto"><use href="#i-spin"/></svg>
      <button class="w-[64px] bg-[#383a3d] text-[#b4b6b8]">Tap</button>
      <button aria-label="템포 설정" class="w-[31px] grid place-items-center"><svg class="w-[10px] h-[10px]"><use href="#i-down"/></svg></button>
    </div>
    <i class="ml-[2px] h-[14px] border-l-[3px] border-dotted border-[#d4d5d6]"></i>
    <div class="ml-auto w-[63px] h-[31px] flex rounded-sm bg-[#383a3d] border border-[#44464a]">
      <button aria-label="메트로놈" class="flex-1 grid place-items-center"><svg class="w-[18px] h-[18px]"><use href="#i-metro"/></svg></button>
      <button aria-label="메트로놈 설정" class="flex-1 grid place-items-center"><svg class="w-[18px] h-[18px]"><use href="#i-e"/></svg></button>
    </div>
    <i class="ml-[2px] h-[14px] border-l-[3px] border-dotted border-[#d4d5d6]"></i>
    <div class="ml-[8px] w-[111px] h-[31px] rounded-sm bg-[#191b1d] border border-[#44464a] pl-[31px] py-[2px]"><i class="block w-px h-full bg-[#6d6f71]"></i></div>
    <i class="ml-[4px] h-[14px] border-l-[3px] border-dotted border-[#d4d5d6]"></i>
  </footer>

  <!-- context menu -->
  <div id="menu" class="absolute left-[770px] top-[391px] w-[306px] bg-[#f1f1f1] border border-[#a0a0a0] text-black pt-px pb-[2px] pl-1 pr-1 shadow-[3px_3px_3px_rgba(0,0,0,0.45)]"></div>
  <div id="submenu" class="absolute left-[1071px] top-[391px] w-[154px] bg-[#f1f1f1] border border-[#a0a0a0] text-black pt-px pb-[2px] px-1 shadow-[3px_3px_3px_rgba(0,0,0,0.45)]"></div>

  <script>
    const W = 1241;        // timeline width in its own units
    const BAR = 118.7;     // one bar
    const X16 = 38;        // position of bar 16
    const pct = v => (v / W * 100) + '%';
    const use = (id, cls) => `<svg class="${cls}"><use href="#i-${id}"/></svg>`;
    const $ = id => document.getElementById(id);

    let seed = 7;
    const rnd = () => (seed = (seed * 16807) % 2147483647) / 2147483647;

    // toolbar tools
    const tools = [
      ['cursor', '개체 선택', '1'], ['range', '영역 선택', '2'], ['pencil', '그리기', '8'], ['eraser', '지우기', '5'],
      ['scissors', '자르기', '3'], ['glue', '글루(Glue)', '4'], ['x', '뮤트', '7'], ['zoom', '확대/축소', '6'],
      ['hand', '컴핑', ''], ['warp', '타임 워프', ''], ['line', '라인', ''], ['speaker', '재생', '9'], ['bucket', '색 지정', '']
    ];
    $('tools').innerHTML += tools.map(([icon, name], i) => `
      <button aria-label="${name}" class="flex-1 grid place-items-center ${i ? '' : 'bg-[#d5d7d9] text-[#2a2c2e]'}">${use(icon, 'w-5 h-5')}</button>`).join('');

    $('submenu').innerHTML = tools.map(([icon, name, key], i) => `
      <button class="w-full h-[22px] flex items-center pr-[16px] text-[13px] ${i ? '' : 'bg-[#99c9f6]'}">
        ${use(icon, 'w-4 h-4 mr-3')}<span>${name}</span><span class="ml-auto text-xs">${key}</span>
      </button>`).join('');

    // [label, shortcut, flag]: '>' opens a submenu, 'off' is disabled
    const menu = [
      ['도구', '', '>'], 0,
      ['프로세스', '', '>'], ['플러그인', '', '>'], ['리얼카피로 변환', '', 'off'], ['이벤트를 파트에 정리'], ['바운스 셀렉션'], ['코드 이벤트를 작성'], 0,
      ['인플레이스 렌더링', '', '>'], ['샘플 트랙 만들기'], 0,
      ['퀀타이즈', 'Q'], ['복제', 'Ctrl+D'], ['선택한 이벤트에 색상 지정...', 'Alt+Shift+C'], ['선택한 이벤트 이름 변경...'], ['스냅포인트를 커서로 이동'], ['풀(Pool)에서 찾기'], 0,
      ['이동', '', '>'], ['페이드', '', '>'], 0,
      ['잘라내기', 'Ctrl+X'], ['복사', 'Ctrl+C'], ['붙여넣기', 'Ctrl+V', 'off'], ['지우기', 'Backspace'], 0,
      ['선택 부분 확대', 'Alt+S'], ['선택 부분 확대 (수평)'], ['줌 실행 취소']
    ];
    $('menu').innerHTML = menu.map((m, i) => m ? `
      <button class="w-full h-[22px] flex items-center pl-7 text-[13px] ${i ? '' : 'bg-[#99c9f6]'} ${m[2] === 'off' ? 'text-[#8a8a8a]' : ''}">
        <span>${m[0]}</span>
        ${m[2] === '>' ? use('chev', 'w-[10px] h-[10px] ml-auto mr-1 text-[#777]') : `<span class="ml-auto mr-[15px] text-xs">${m[1] || ''}</span>`}
      </button>` : '<hr class="border-[#cfcfcf] my-[3px] ml-[27px]">').join('');

    // info line
    const info = [
      ['파일', 'Lead Vocals', 'l'], ['시작', '5.  1.  1.    0', 'r'], ['종료', '121.  1.  2.  30', 'r'], ['길이', '116.  0.  1.  30', 'r'], ['스냅', '5.  1.  1.    0', 'r'],
      ['페이드인', '0.  0.  0.    0', 'r'], ['페이드아웃', '0.  0.  0.    0', 'r'], ['볼륨', '0.00', 'v'], ['위상 반전', 'Off'], ['트랜스포즈', '0'],
      ['파인튠 (Fine-Tune)', '0'], ['뮤트', '-'], ['뮤지컬 모드', '-'], ['알고리즘', 'elastique Pro - Time']
    ];
    const align = { l: 'text-left pl-[10px]', r: 'text-right pr-[5px]', v: 'flex justify-between px-3', undefined: 'text-center' };
    $('infoline').innerHTML = info.map(([h, v, a]) => `
      <div class="border-r-2 border-[#77797b] flex flex-col gap-[10px] pt-px">
        <div class="text-center text-[15px] text-[#a4a6a8]">${h}</div>
        <div class="font-bold text-[13px] whitespace-pre ${align[a]}">${v}${a === 'v' ? '<span class="text-[#a4a6a8]">dB</span>' : ''}</div>
      </div>`).join('');

    // track list
    const tracks = [
      { name: 'Lead Vocals', color: '#ff6a6a', bg: '#2a0f11', fill: '#ff6f6f', line: '#ff6f6f', grid: '#451d20' },
      { name: 'Backing Vocals', color: '#ffaeae', bg: '#ffadad', fill: '#7a0c0c', line: '#7a0c0c', grid: '#f47f80' },
      { name: 'Drums', color: '#fffb70', bg: '#fffb70', fill: '#e2dc1c', line: '#36350a', grid: '#dcd84a' },
      { name: 'Bass', color: '#92f2ff', bg: '#90f1ff', fill: '#22d6ee', line: '#0a5362', grid: '#5cdcf0' },
      { name: 'Extras (Filtered)', color: '#f4e2ca', bg: '#f5e3ca', fill: '#dfae62', line: '#64430f', grid: '#e2c59a' },
      { name: 'Guitar 1', color: '#d4ffca', bg: '#d4ffca', fill: '#72f85c', line: '#1d7a10', grid: '#9cf08c' },
      { name: 'Guitar 2', color: '#d4ffca', bg: '#d4ffca', fill: '#72f85c', line: '#1d7a10', grid: '#9cf08c' },
      { name: 'Keyboard 1', color: '#46a0ff', bg: '#46a0ff', fill: '#1566b4', line: '#06264e', grid: '#1c82ea' },
      { name: 'Keyboard 2', color: '#88c1ff', bg: '#87c0ff', fill: '#1f78d4', line: '#0a386c', grid: '#4c9cf0' },
      { name: 'Band (No Bass)', color: '#d47257', bg: '#dde0e6', fill: 'none', line: '#b2625a', grid: '#b4b7bd' },
      { name: 'Band (No Drums)', color: '#de9761', bg: '#dde0e6', fill: 'none', line: '#b08258', grid: '#b4b7bd' }
    ];
    $('tracks').innerHTML = tracks.map((t, i) => {
      const sel = i === 2;
      const box = sel ? 'bg-[#7f8183] border border-[#4c4e50] rounded-xs flex' : 'bg-[#2f3235] border border-[#191b1c] rounded-xs flex';
      const dim = sel ? 'text-[#56585a]' : 'text-[#717375]';
      return `
      <div class="flex-1 min-h-0 flex border-b border-black overflow-hidden ${sel ? 'bg-[#6c6e70] text-[#dcdddf]' : 'bg-[#26292c] text-[#b0b2b4]'}">
        <div class="w-[51px] shrink-0 flex justify-between pl-1 pr-[6px] pt-[7px] text-[#1c1c1c] text-sm leading-none" style="background:${t.color}">
          ${use('wave', 'w-5 h-4')}<span>${i + 1}</span>
        </div>
        <div class="w-[73px] shrink-0 pl-[6px] pt-[3px]">
          <div class="w-[62px] h-[23px] font-bold text-base leading-none ${box}"><button class="flex-1">M</button><button class="flex-1">S</button></div>
          <div class="w-[23px] h-[23px] mt-[6px] ml-[2px] rounded-xs border ${sel ? 'border-[#4c4e50]' : 'border-[#1b1d1f]'}"></div>
        </div>
        <div class="pl-[3px] pt-[3px]">
          <div class="h-[26px] pl-1 flex items-center font-bold text-[15px] ${sel ? 'text-white' : 'text-[#d8d9da]'}">${t.name}</div>
          <div class="flex gap-[3px] h-[23px]">
            <div class="w-[59px] ${dim} ${box}"><button aria-label="녹음 준비" class="flex-1 grid place-items-center">${use('dot', 'w-[11px] h-[11px]')}</button><button aria-label="모니터" class="flex-1 grid place-items-center">${use('speaker', 'w-[14px] h-[14px]')}</button></div>
            <div class="w-[60px] ${box}"><button aria-label="채널 편집" class="flex-1 grid place-items-center">${use('e', 'w-[15px] h-[15px]')}</button><button aria-label="스테레오" class="flex-1 grid place-items-center">${use('stereo', 'w-[17px] h-[17px]')}</button></div>
            <div class="w-[59px] font-bold text-base leading-none ${box}"><button class="flex-1">R</button><button class="flex-1">W</button></div>
            <div class="w-[29px] ${box}"><button aria-label="레인" class="flex-1 grid place-items-center">${use('lanes', 'w-[14px] h-[14px]')}</button></div>
          </div>
        </div>
      </div>`;
    }).join('');

    // vertical beat lines
    function beats(y1, y2, color) {
      let d = '';
      for (let x = X16 - BAR / 4; x < W; x += BAR / 4) d += `M${x.toFixed(1)} ${y1}V${y2}`;
      return `<path d="${d}" stroke="${color}" stroke-width="1" vector-effect="non-scaling-stroke"/>`;
    }
    const svg = (h, inner) => `<svg class="absolute inset-0 w-full h-full" viewBox="0 0 ${W} ${h}" preserveAspectRatio="none">${inner}</svg>`;

    // bar ruler
    let html = svg(30, `<rect width="${X16}" height="30" fill="#8b8d90"/><path d="M27 0h11v11z" fill="#fff"/>` + beats(0, 11, '#85878a'));
    for (let b = 0; b <= 10; b++) {
      html += `<div class="absolute inset-y-0 border-l border-[#e8e8e8] pl-[5px] pt-3 text-[15px] font-bold text-white" style="left:${pct(X16 + b * BAR)}">${16 + b}</div>`;
    }
    $('ruler').innerHTML = html;

    // arranger
    $('arranger').innerHTML = svg(57, beats(0, 57, '#4a555b')) +
      `<div class="absolute left-0 top-[2px] h-[53px] bg-[#f0e678] border-y border-[#b8a83a]" style="width:${pct(37)}"></div>` +
      [[38, 949], [988, 300]].map(([x, w]) => `
        <div class="absolute top-[1px] h-[55px] bg-[#aacf73] border-2 border-[#c3ea8c] outline outline-[#4c6c22]" style="left:${pct(x)};width:${pct(w)}">
          <span class="block w-16 h-[18px] mt-px bg-[#7f9c56] pl-1 leading-[19px] text-[13px] font-bold text-white [clip-path:polygon(0_0,100%_0,70%_100%,0_100%)]">Verse</span>
        </div>`).join('') + svg(57, beats(25, 54, '#92b95a'));

    // seconds ruler
    html = '';
    for (let s = 31; s <= 51; s++) {
      const x = 246 + (s - 35) * 61.7;
      html += s % 5 ? `<i class="absolute top-0 h-2 w-px bg-[#86969e]" style="left:${pct(x)}"></i>`
        : `<span class="absolute top-0 border-l border-[#333] pl-[5px] pt-[6px] pb-1 text-sm leading-none text-[#20282c]" style="left:${pct(x)}">${s}</span>`;
    }
    $('seconds').innerHTML = html;

    // chords
    const pattern = [[0, 43, 'D', 'maj'], [43, 31, 'C', '♯m'], [74, 30, 'B', 'm'], [104, 58, 'C', '♯min'], [162, 74, 'F', '♯min', '7']];
    const chords = [];
    [38, 275, 513, 988, 1225].forEach(o => pattern.forEach(p => { if (o + p[0] < W) chords.push([o + p[0], ...p.slice(1)]); }));
    chords.push([750, 93, 'G', 'maj', '7', '/A']);
    $('chords').innerHTML = svg(36, beats(0, 36, '#4a555b')) + chords.map(([x, w, root, rest, sup, tail]) => `
      <div class="absolute top-[2px] h-[32px] overflow-hidden whitespace-nowrap bg-[#db785c] border border-[#f09a78] outline outline-[#7a3420] text-[#24100a] leading-[30px] font-['Liberation_Sans','DejaVu_Sans',sans-serif] ${sup ? 'pl-1' : 'pl-px'}" style="left:${pct(x)};width:${pct(w)}"><span class="text-2xl leading-[30px]">${root}</span><span class="text-[19px] leading-[30px]">${rest}</span>${sup ? `<span class="align-super text-lg leading-none">${sup}</span>` : ''}${tail ? `<span class="text-2xl leading-[30px]">${tail}</span>` : ''}</div>`).join('');
    $('scales').innerHTML = svg(22, beats(0, 22, '#65585a')) + [[81, 'A 메이저'], [750, 'D 메이저'], [1032, 'A 메이저']].map(([x, n]) => `
      <div class="absolute top-px h-[19px] grid place-items-center bg-[#db785c] border border-[#f09a78] text-[#4a2013] text-sm whitespace-nowrap" style="left:${pct(x)};width:${pct(61)}">${n}</div>`).join('');

    // ---- waveforms ----
    // hit: [x, amp, decay, hold]
    function envelope(hits, base, noise) {
      const a = new Array(W + 1).fill(base);
      hits.forEach(([x0, amp, dec, hold = 0]) => {
        for (let x = Math.max(0, Math.floor(x0 - 2)); x <= W && x < x0 + hold + dec * 5; x++) {
          const t = x - x0;
          let v;
          if (t < 0) v = amp * (1 + t / 2);
          else if (hold) v = t < 2 ? amp : t < hold ? amp * 0.5 : amp * 0.5 * Math.max(0, 1 - (t - hold) / dec);
          else v = amp * Math.exp(-t / dec);
          a[x] = Math.max(a[x], v);
        }
      });
      return a.map(v => v + (v > 0.6 ? (rnd() - 0.5) * noise : 0));
    }
    function shape(env, c, t) {
      const pts = env.map((v, x) => `${x} ${(c - v).toFixed(1)}`);
      const low = env.map((v, x) => `${x} ${(c + v).toFixed(1)}`);
      if (t.fill === 'none') {
        return `<path d="M${pts.join('L')}M${low.join('L')}" fill="none" stroke="${t.line}" stroke-width="1"/>`;
      }
      return `<path d="M${pts.join('L')}L${low.reverse().join('L')}Z" fill="${t.fill}" stroke="${t.line}" stroke-width="1"/>`;
    }
    const B = BAR / 4;
    const every = (step, off, fn) => {
      const out = [];
      for (let i = 0, x = X16 - BAR + off; x < W; x += step, i++) { const h = fn(x, i); if (h) out.push(h); }
      return out;
    };

    // vocal phrases: [start, length, amp at start, amp at end]
    const vox = [[0, 34, 3, 4], [34, 18, 4, 4], [52, 16, 6, 6], [68, 22, 5, 1], [158, 20, 3, 5], [178, 20, 4, 3], [198, 46, 5, 2], [244, 8, 4, 3], [258, 20, 3, 4], [278, 14, 6, 5], [292, 16, 5, 1],
      [363, 34, 3, 5], [397, 22, 5, 2], [419, 60, 5, 1], [480, 30, 4, 4], [510, 14, 6, 5], [524, 22, 4, 1], [601, 22, 5, 4], [623, 24, 4, 3], [648, 24, 4, 5], [672, 40, 6, 4], [712, 20, 3, 3], [732, 60, 5, 4], [792, 130, 4.5, 1],
      [940, 8, 4, 8], [948, 20, 6, 4], [968, 20, 4, 3], [990, 14, 5, 4], [1004, 20, 6, 1], [1062, 8, 7, 3], [1072, 8, 4, 2], [1090, 28, 4, 4], [1118, 16, 7, 6], [1134, 10, 3, 4], [1144, 20, 6, 4], [1164, 40, 4, 2], [1204, 20, 3, 4], [1224, 17, 4, 6]];
    const waves = [
      () => {
        const a = new Array(W + 1).fill(0.7);
        vox.forEach(([x0, len, a1, a2]) => {
          for (let x = x0; x <= Math.min(W, x0 + len); x++) a[x] = Math.max(a[x], (a1 + (a2 - a1) * (x - x0) / len) * (0.7 + rnd() * 0.45));
        });
        return [a, a];
      },
      () => [envelope([], 0.4, 0), envelope([], 0.4, 0)],
      () => {
        const up = every(B, 3, (x, i) => [x, i % 2 ? 9 : 13, 2.4]);
        up.push([909, 4, 3, 4], [916, 4, 3, 4]);
        const lo = up.concat(every(B, 3 + B / 2, (x, i) => i % 3 ? [x, 2, 2, 2] : null));
        return [envelope(up, 0.5, 0.3), envelope(lo, 0.5, 0.3)];
      },
      () => {
        const h = every(B / 2, 3, (x, i) => rnd() > 0.35 ? [x, i % 2 ? 4 : 7, 4, 5 + rnd() * 8] : null);
        h.push([825, 7, 5, 40], [880, 5, 6, 40], [940, 7, 8, 24]);
        const e = envelope(h, 0.4, 0.5);
        return [e, e];
      },
      () => {
        const up = every(B * 2, 3, x => [x, 9 + rnd() * 3, 3]);
        up.push([70, 7, 20, 20], [737, 6, 14, 200]);
        every(B, 3, x => { if (rnd() > 0.5) up.push([x, 4, 5, 3]); });
        const lo = up.concat(every(B, 8, x => [x, 5 * rnd() + 1, 4]));
        return [envelope(up, 0.7, 1), envelope(lo, 0.8, 1.2)];
      },
      () => {
        const h = every(B / 2, 3, () => rnd() > 0.4 ? [0, 3 + rnd() * 4, 8, 8 + rnd() * 8] : null);
        h.forEach((v, i) => v[0] = X16 + 3 + i * B * 0.9);
        const g = h.filter(v => v[0] < 900 || v[0] > 985);
        g.push([930, 8, 9, 4], [736, 4, 10, 160]);
        return [envelope(g, 0.4, 0.5), envelope([], 0.5, 0)];
      },
      () => {
        const h = [54, 84, 114, 470, 500, 516, 530, 544, 560, 606, 636, 666, 679, 696, 711, 1004, 1034, 1065, 1108, 1122, 1182].map(x => [x, 8, 6, 3]);
        h.push([441, 7, 8, 24], [1152, 8, 30, 2]);
        return [envelope(h, 0.5, 0.3), envelope([], 0.5, 0)];
      },
      () => [envelope([], 0.6, 0.3), envelope(every(B, 3, () => null).concat(every(B * 1.5, 3, x => [x, 2 + rnd() * 2, 8, 6])), 0.8, 0.8)],
      () => {
        const e = envelope([[70, 2, 10, 10], [440, 3, 10, 10], [930, 5, 6, 8], [1152, 2, 10, 8]], 0.8, 0.7);
        for (let x = 945; x < 986; x++) e[x] = 0.3;
        return [e, e];
      },
      () => [0, 1].map(() => envelope(every(B, 3, () => 0).concat(
        every(B, 3, x => [x, 10 + rnd() * 4, 4]), every(B, 3 + B / 2, x => rnd() > 0.4 ? [x, 5 + rnd() * 4, 3] : null), every(22, 9, x => [x, 7 + rnd() * 3, 8, 16])), 2, 1.2)),
      () => [0, 1].map(() => envelope(
        every(B * 2, 3, x => [x, 9 + rnd() * 5, 3]).concat(every(B / 2, 5, x => rnd() > 0.5 ? [x, 5 + rnd() * 6, 3] : null), every(19, 7, x => [x, 7 + rnd() * 3, 8, 14])), 2.5, 1.6))
    ];

    $('lanes').innerHTML = tracks.map((t, i) => {
      const [u, l] = waves[i]();
      let extra = '';
      if (i === 0) {
        let d = '';
        vox.forEach(([x, len]) => { for (let k = x; k < x + Math.min(len, 50); k += 8 + rnd() * 22) d += `M${k.toFixed(0)} 6V49`; });
        extra = `<path d="${d}" stroke="#f0313c" stroke-width="1" stroke-dasharray="2 2"/>`;
      }
      const edge = i === 0 ? '#a8616a' : '#ffffff66';
      return `
      <div class="relative flex-1 min-h-0 bg-[#232d34]">
        ${svg(57, beats(0, 57, '#59636a') + `<rect y="2" width="${W}" height="53" fill="${t.bg}"/><path d="M0 2.500H${W}M0 54H${W}" stroke="${edge}"/><path d="M0 1.500H${W}M0 55H${W}" stroke="#0006"/>` + beats(4, 52, t.grid) + extra + shape(u, 17, t) + shape(l, 42, t))}
      </div>`;
    }).join('');
  </script>
</body>
</html>
